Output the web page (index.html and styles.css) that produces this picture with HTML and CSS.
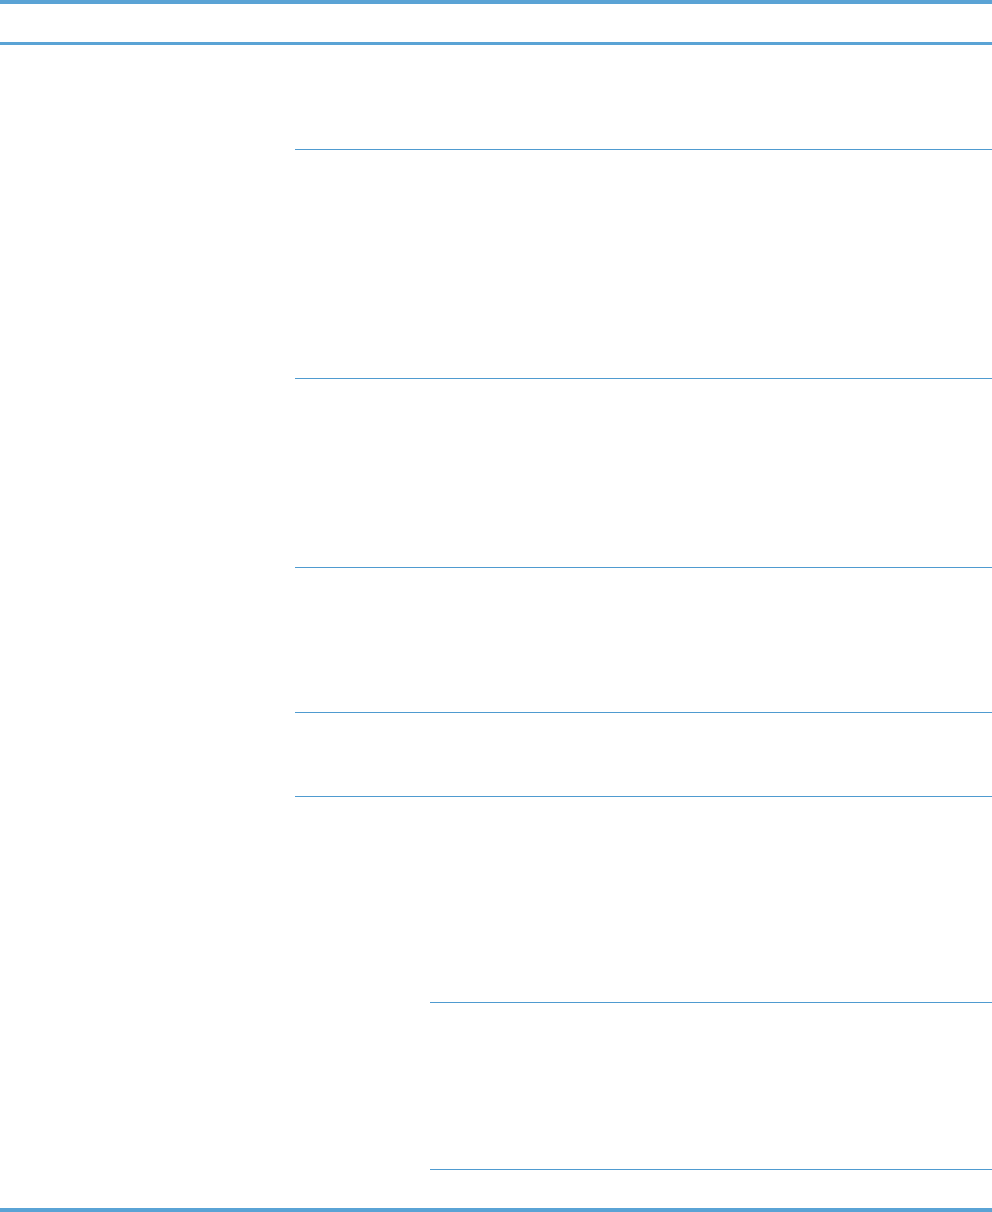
FILE: index.html
```html
<!DOCTYPE html>
<html lang="en">
<head>
  <meta charset="UTF-8" />
  <meta name="viewport" content="width=device-width, initial-scale=1" />
  <title>Table</title>
  <link rel="stylesheet" href="styles.css">
</head>
<body>

<div class="page">
  <div class="table-head"></div>

  <div class="table-body">
    <div class="row row-first"></div>
    <div class="row row-a"></div>
    <div class="row row-b"></div>
    <div class="row row-c"></div>
    <div class="row row-d"></div>
    <div class="row row-e">
      <div class="sub-intro"></div>
      <div class="sub-row sub-a"></div>
      <div class="sub-row sub-b"></div>
    </div>
  </div>

  <div class="table-foot"></div>
</div>

</body>
</html>
```

FILE: styles.css
```css
:root {
  --rule-thick: #5aa3d5;
  --rule-thin: #4f9bd0;
  --white: #ffffff;
}

* {
  box-sizing: border-box;
}

body {
  margin: 0;
  background: var(--white);
  font-family: 'Liberation Sans', Arial, sans-serif;
}

.page {
  width: 100%;
  height: 1212px;
  display: flex;
  flex-direction: column;
}

.table-head {
  height: 45px;
  border-top: 4px solid var(--rule-thick);
  border-bottom: 3px solid var(--rule-thick);
}

.table-body {
  flex: 1;
  display: flex;
  flex-direction: column;
  padding-left: 295px;
}

.row {
  border-top: 1px solid var(--rule-thin);
}

.row-first { height: 104px; border-top: none; }
.row-a { height: 229px; }
.row-b { height: 189px; }
.row-c { height: 145px; }
.row-d { height: 84px; }

.row-e {
  flex: 1;
  display: flex;
  flex-direction: column;
}

.sub-intro {
  height: 205px;
}

.sub-row {
  margin-left: 135px;
  border-top: 1px solid var(--rule-thin);
}

.sub-a { height: 167px; }
.sub-b { flex: 1; }

.table-foot {
  height: 4px;
  background: var(--rule-thick);
}
```
